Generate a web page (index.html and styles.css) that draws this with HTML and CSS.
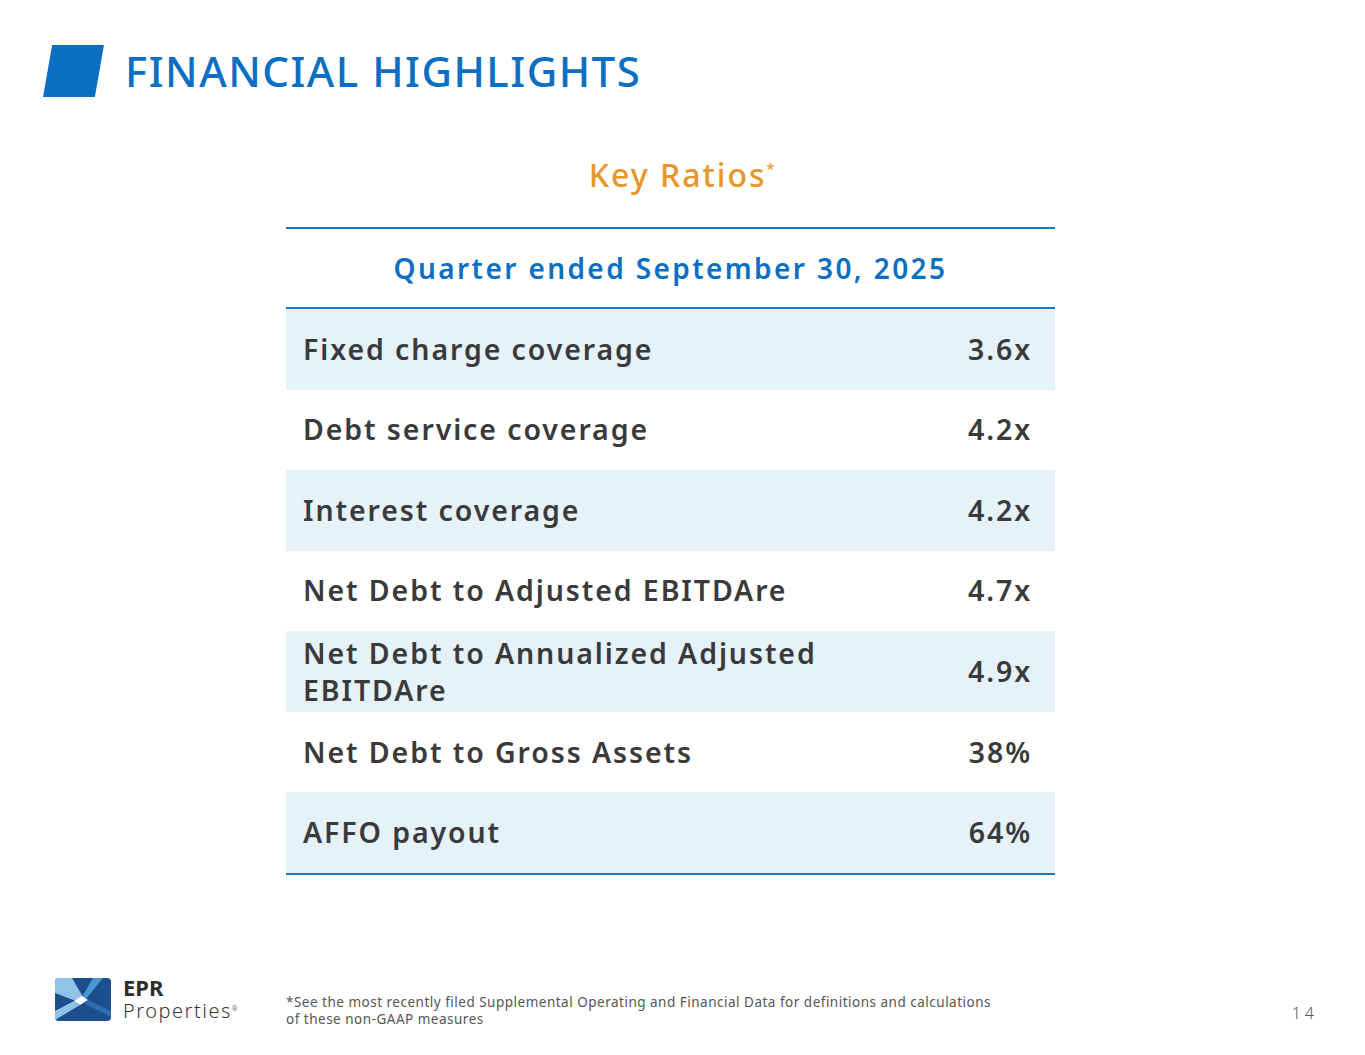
FILE: index.html
```html
<!DOCTYPE html>
<html>
<head>
<meta charset="utf-8">
<link rel="stylesheet" href="styles.css">
</head>
<body>
<div class="slide">
  <header class="title-bar">
    <div class="title-mark"></div>
    <h1 class="title">FINANCIAL HIGHLIGHTS</h1>
  </header>
  <main class="content">
    <h2 class="subtitle">Key Ratios<sup>*</sup></h2>
    <div class="table">
      <div class="thead">Quarter ended September 30, 2025</div>
      <div class="row alt"><span class="label">Fixed charge coverage</span><span class="val">3.6x</span></div>
      <div class="row"><span class="label">Debt service coverage</span><span class="val">4.2x</span></div>
      <div class="row alt"><span class="label">Interest coverage</span><span class="val">4.2x</span></div>
      <div class="row"><span class="label">Net Debt to Adjusted EBITDAre</span><span class="val">4.7x</span></div>
      <div class="row alt"><span class="label">Net Debt to Annualized Adjusted<br>EBITDAre</span><span class="val">4.9x</span></div>
      <div class="row"><span class="label">Net Debt to Gross Assets</span><span class="val">38%</span></div>
      <div class="row alt"><span class="label">AFFO payout</span><span class="val">64%</span></div>
    </div>
  </main>
  <footer class="footer">
    <div class="logo">
      <svg class="logo-mark" width="56" height="43" viewBox="0 0 56 43">
        <defs><clipPath id="c"><rect x="0" y="0" width="56" height="43" rx="4"/></clipPath></defs>
        <g clip-path="url(#c)">
          <rect width="56" height="43" fill="#1d4f8f"/>
          <polygon points="0,0 17,0 28,19 21,23 0,15" fill="#8fc3e8"/>
          <polygon points="38,0 48,0 31,21 27,19" fill="#4a97d6"/>
          <polygon points="19,23 27,18 33,22 25,27" fill="#ffffff"/>
          <polygon points="0,33 19,23 25,27 0,42" fill="#8fc3e8"/>
          <polygon points="33,22 56,33 56,39 30,26" fill="#2d6db5"/>
        </g>
      </svg>
      <div class="logo-text">
        <div class="logo-epr">EPR</div>
        <div class="logo-prop">Properties<sup>®</sup></div>
      </div>
    </div>
    <p class="footnote">*See the most recently filed Supplemental Operating and Financial Data for definitions and calculations<br>of these non-GAAP measures</p>
    <div class="page-num">14</div>
  </footer>
</div>
</body>
</html>
```
FILE: styles.css
```css
* { box-sizing: border-box; }
html, body { margin: 0; padding: 0; background: #fff; }
body { font-family: "Noto Sans", "Open Sans", sans-serif; }
.slide {
  width: 1365px;
  height: 1055px;
  display: flex;
  flex-direction: column;
  position: relative;
}
.title-bar {
  display: flex;
  align-items: center;
  padding: 45px 0 0 43px;
  height: 97px;
  gap: 21px;
}
.title-mark {
  width: 61px;
  height: 52px;
  background: #0a6fc2;
  clip-path: polygon(15% 0, 100% 0, 85% 100%, 0 100%);
}
.title {
  margin: 0;
  font-family: "Noto Sans", sans-serif;
  font-weight: 500;
  font-size: 42px;
  letter-spacing: 1.5px;
  color: #0a6fc2;
  line-height: 52px;
}
.content {
  display: flex;
  flex-direction: column;
  align-items: flex-start;
  padding-left: 286px;
}
.subtitle {
  margin: 54px 0 0;
  width: 769px;
  padding-left: 24px;
  text-align: center;
  font-family: "Noto Sans", sans-serif;
  font-weight: 500;
  font-size: 32px;
  letter-spacing: 2px;
  color: #e8952a;
  line-height: 48px;
  height: 48px;
}
.subtitle sup { font-size: 14px; vertical-align: top; line-height: 36px; margin-left: 0; }
.table {
  margin-top: 28px;
  width: 769px;
  border-top: 2px solid #1f77c4;
  border-bottom: 2px solid #1f77c4;
}
.thead {
  height: 80px;
  border-bottom: 2px solid #1f77c4;
  display: flex;
  align-items: center;
  justify-content: center;
  font-family: "Noto Sans", sans-serif;
  font-weight: 600;
  font-size: 28px;
  color: #0a6fc2;
  letter-spacing: 2.4px;
}
.row {
  height: 80.57px;
  display: flex;
  align-items: center;
  justify-content: space-between;
  padding: 0 23px 0 17px;
  font-family: "Noto Sans", sans-serif;
  font-weight: 600;
  font-size: 28.5px;
  color: #3a3a3a;
  letter-spacing: 1.9px;
  line-height: 37px;
}
.row.alt { background: #e5f2fa; }
.footer {
  position: absolute;
  left: 0;
  right: 0;
  top: 970px;
  display: flex;
  align-items: flex-start;
  padding: 0 47px 0 55px;
}
.logo {
  display: flex;
  align-items: flex-start;
  gap: 12px;
  padding-top: 8px;
  width: 231px;
}
.logo-text { display: flex; flex-direction: column; margin-top: -2px; }
.logo-epr {
  font-family: "Noto Sans", sans-serif;
  font-weight: 700;
  font-size: 22px;
  line-height: 22px;
  margin-bottom: 3px;
  color: #2e2e2e;
}
.logo-prop {
  font-family: "Noto Sans", sans-serif;
  font-weight: 300;
  font-size: 20px;
  letter-spacing: 1.5px;
  line-height: 20px;
  color: #3a3a3a;
  white-space: nowrap;
}
.logo-prop sup { font-size: 7px; vertical-align: top; line-height: 16px; margin-left: 0; letter-spacing: 0; }
.footnote {
  margin: 24px 0 0;
  font-family: "Noto Sans", sans-serif;
  font-size: 13.5px;
  letter-spacing: 0.5px;
  line-height: 17px;
  color: #555;
  flex: 1;
}
.page-num {
  margin-top: 32px;
  font-family: "Noto Sans", sans-serif;
  font-weight: 300;
  font-size: 16px;
  letter-spacing: 4px;
  color: #555;
}
```
